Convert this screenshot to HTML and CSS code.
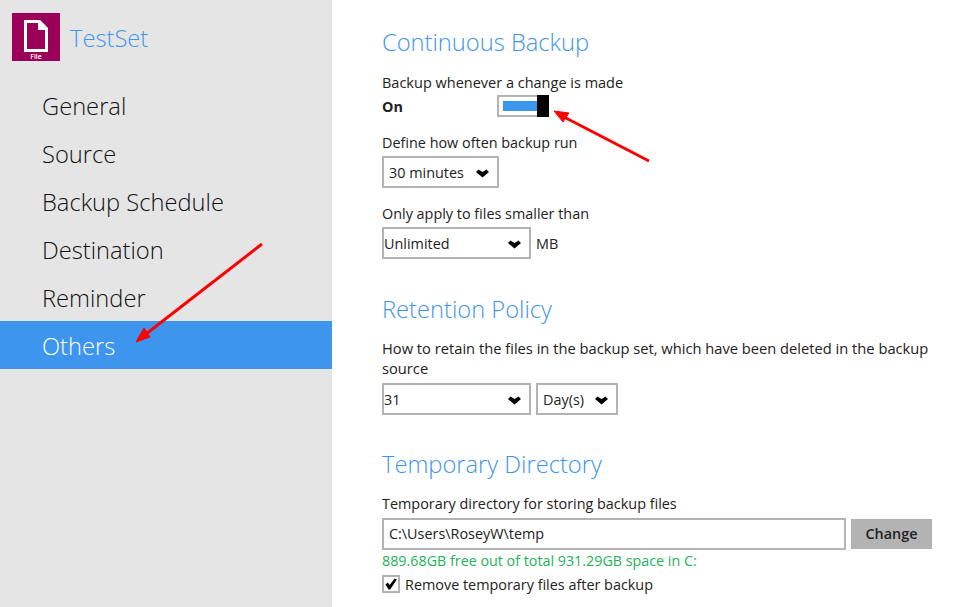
FILE: index.html
```html
<!DOCTYPE html>
<html lang="en">
<head>
    <meta charset="UTF-8">
    <title>TestSet - Others</title>
    <link rel="stylesheet" href="styles.css">
</head>
<body>
    <div id="container">
        <div id="sidebar">
            <div class="set_head">
                <div class="set_icon">
                    <svg width="24" height="32" viewBox="0 0 24 32">
                        <path d="M1.5 1.5H15L22.5 9V30.5H1.5Z" fill="none" stroke="#fff" stroke-width="3"/>
                        <path d="M14 0H16L24 8V10H14Z" fill="#fff"/>
                    </svg>
                    <span>File</span>
                </div>
                <div class="set_name">TestSet</div>
            </div>
            <ul class="menu">
                <li>General</li>
                <li>Source</li>
                <li>Backup Schedule</li>
                <li>Destination</li>
                <li>Reminder</li>
                <li class="on">Others</li>
            </ul>
        </div>
        <div id="content">
            <h2 class="first">Continuous Backup</h2>
            <p class="label wide">Backup whenever a change is made</p>
            <div class="toggle_row">
                <b>On</b>
                <div class="toggle"><i></i><em></em></div>
            </div>
            <p class="label gap1">Define how often backup run</p>
            <div class="row tight">
                <div class="sel w117 pad">30 minutes<svg class="chev" width="13" height="9" viewBox="0 0 13 9"><path d="M0 3L2.5 0.5L6.5 3L10.5 0.5L13 3L6.5 8.5Z"/></svg></div>
            </div>
            <p class="label gap2">Only apply to files smaller than</p>
            <div class="row tight">
                <div class="sel w149">Unlimited<svg class="chev" width="13" height="9" viewBox="0 0 13 9"><path d="M0 3L2.5 0.5L6.5 3L10.5 0.5L13 3L6.5 8.5Z"/></svg></div>
                <span class="unit">MB</span>
            </div>
            <h2 class="sec1">Retention Policy</h2>
            <p class="label para">How to retain the files in the backup set, which have been deleted in the backup source</p>
            <div class="row loose">
                <div class="sel w149">31<svg class="chev" width="13" height="9" viewBox="0 0 13 9"><path d="M0 3L2.5 0.5L6.5 3L10.5 0.5L13 3L6.5 8.5Z"/></svg></div>
                <div class="sel w82 pad">Day(s)<svg class="chev" width="13" height="9" viewBox="0 0 13 9"><path d="M0 3L2.5 0.5L6.5 3L10.5 0.5L13 3L6.5 8.5Z"/></svg></div>
            </div>
            <h2 class="sec2">Temporary Directory</h2>
            <p class="label">Temporary directory for storing backup files</p>
            <div class="row">
                <div class="path">C:\Users\RoseyW\temp</div>
                <button>Change</button>
            </div>
            <p class="free">889.68GB free out of total 931.29GB space in C:</p>
            <div class="check_row">
                <div class="check"><svg width="12" height="12" viewBox="0 0 12 12"><path d="M0.5 6.5L2.8 4.6L4.6 7L9.8 0.5L11.8 1.5L5.2 11.5H3.6Z"/></svg></div>
                Remove temporary files after backup
            </div>
        </div>
    </div>
    <!-- red arrows drawn over the screenshot -->
    <svg id="arrows" width="959" height="607" viewBox="0 0 959 607">
        <g fill="#f00" stroke="#f00">
            <path d="M262 244L146 334" stroke-width="3" fill="none"/>
            <path d="M136 342L150 337L144 328Z" stroke-width="1"/>
            <path d="M649 161L564 117" stroke-width="3" fill="none"/>
            <path d="M554 111L569 113L563 122Z" stroke-width="1"/>
        </g>
    </svg>
</body>
</html>
```

FILE: styles.css
```css
* {margin: 0; padding: 0; box-sizing: border-box;}
html, body {height: 100%; overflow: hidden;}
body {background: #fff; color: #222; font-family: "Open Sans", sans-serif; font-size: 14.4px;}
#container {display: flex; height: 607px;}

#sidebar {width: 332px; flex-shrink: 0; background: #e5e5e5; padding-top: 13px;}
.set_head {display: flex; align-items: center; gap: 10px; margin-left: 12px; height: 48px;}
.set_icon {width: 48px; height: 48px; background: #9b0058; display: flex; flex-direction: column; align-items: center; padding-top: 7px;}
.set_icon svg {display: block;}
.set_icon span {color: #fff; font-size: 7px; line-height: 9px; font-weight: 600;}
.set_name {font-size: 23.7px; font-weight: 300; color: #3d95ee; padding-top: 2px;}
.menu {list-style: none; margin-top: 20px;}
.menu li {height: 48px; line-height: 51px; padding-left: 42px; font-size: 23.7px; font-weight: 300; color: #111;}
.menu li.on {background: #3d95ee; color: #fff;}

#content {flex: 1; padding: 26px 27px 0 50px;}
h2 {font-size: 23.7px; font-weight: 300; color: #3d95ee; line-height: 32px;}
.label {line-height: 20px; margin-top: 14px;}
.wide {font-size: 14.5px; margin-top: 15px;}
.toggle_row {display: flex; align-items: center; height: 22px; margin-top: 2px;}
.toggle_row b {width: 115px; font-weight: 700;}
.toggle {width: 52px; height: 22px; border: 2px solid #b3b3b3; border-right: 0; position: relative; padding: 4px; display: flex;}
.toggle i {display: block; width: 34px; height: 10px; background: #3d95ee;}
.toggle em {display: block; position: absolute; right: 0; top: -2px; width: 12px; height: 22px; background: #000;}
.gap1 {margin-top: 16px;}
.gap2 {margin-top: 16px;}
.row {display: flex; align-items: center; gap: 5px; margin-top: 4px;}
.row.tight {margin-top: 3px;}
.row.loose {margin-top: 5px;}
.sel {height: 32px; border: 2px solid #b3b3b3; display: flex; align-items: center; justify-content: space-between; padding: 0 8px 0 0;}
.pad {padding-left: 5px;}
.w117 {width: 117px;}
.w149 {width: 149px;}
.w82 {width: 82px;}
.chev {display: block; margin-top: 2px;}
.sec1 {margin-top: 34px;}
.sec2 {margin-top: 33px;}
.para {margin-top: 13px; font-size: 14.7px;}
.path {width: 464px; height: 32px; border: 2px solid #b3b3b3; line-height: 28px; padding-left: 5px;}
button {width: 81px; height: 30px; border: 0; background: #b3b3b3; color: #222; font-family: inherit; font-size: 14.4px; font-weight: 600; padding-bottom: 2px;}
.free {color: #1db35a; font-size: 14.3px; line-height: 20px; margin-top: 1px;}
.check_row {display: flex; align-items: center; gap: 5px; margin-top: 4px; height: 18px;}
.check {width: 18px; height: 18px; border: 2px solid #b3b3b3; display: flex; align-items: center; justify-content: center;}
.check svg {display: block;}

#arrows {position: absolute; left: 0; top: 0; pointer-events: none;}
```
